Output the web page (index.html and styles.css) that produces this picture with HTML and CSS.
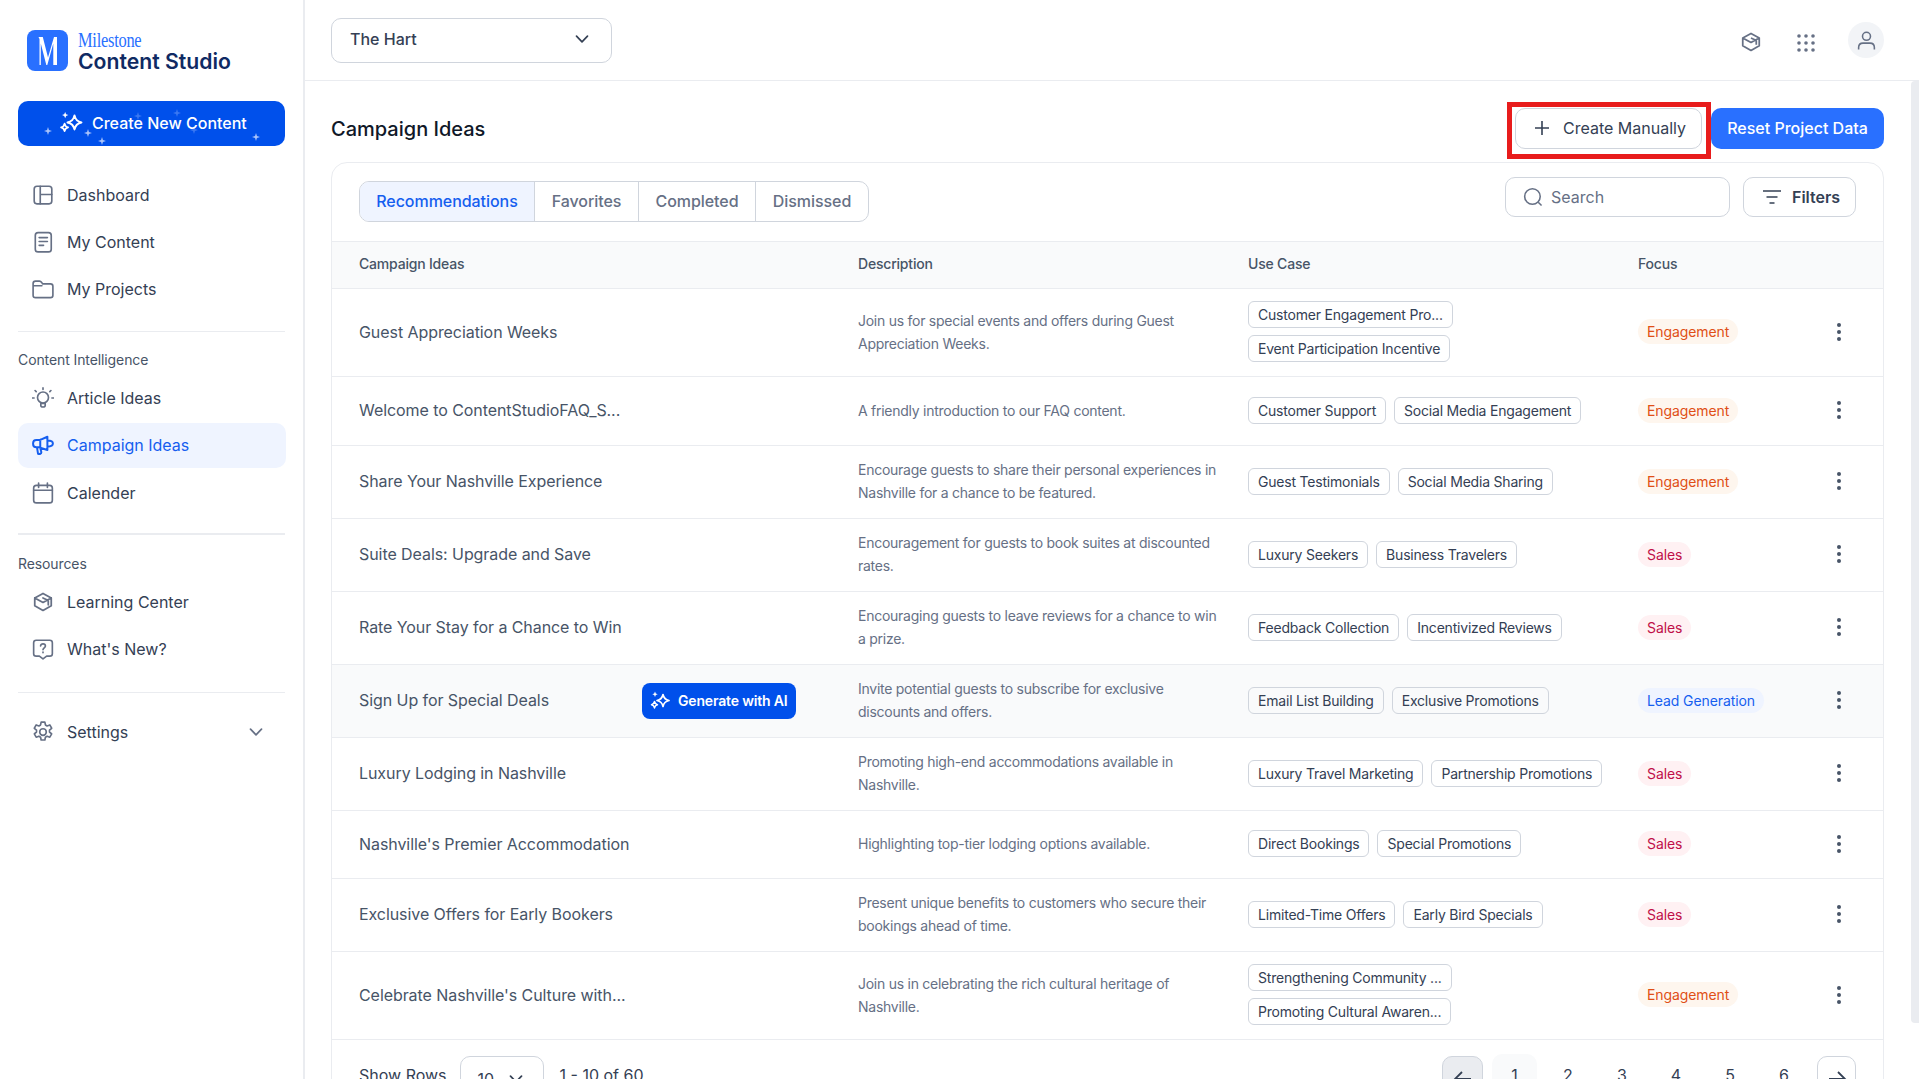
FILE: index.html
```html
<!DOCTYPE html>
<html>
<head>
    <meta charset="utf-8">
    <title>Campaign Ideas</title>
    <link rel="stylesheet" href="styles.css">
</head>
<body>
    <svg class="defs" width="0" height="0">
        <symbol id="sparkle" viewBox="0 0 24 24">
            <path d="M15 5.500c.7 3.600 2.400 5.300 6 6-3.600.7-5.300 2.400-6 6-.7-3.600-2.400-5.300-6-6 3.600-.7 5.300-2.400 6-6z" fill="none" stroke="currentColor" stroke-width="1.700" stroke-linejoin="round"/>
            <path d="M6.500 12.500c.4 2 1.100 2.800 3 3.200-1.900.4-2.600 1.200-3 3.200-.4-2-1.100-2.800-3-3.200 1.900-.4 2.600-1.200 3-3.200z" fill="none" stroke="currentColor" stroke-width="1.500" stroke-linejoin="round"/>
            <path d="M7 2.500l.8 1.900 1.900.8-1.900.8L7 7.900 6.200 6 4.300 5.200l1.900-.8z" fill="currentColor"/>
        </symbol>
        <symbol id="cap" viewBox="0 0 20 20">
            <path d="M10 2.200l7.500 4.100-7.500 4.100-7.500-4.100z M2.500 6.300v7.200l7.500 4.200 7.500-4.200V6.300 M10 6.300l4.800 2.300v4" fill="none" stroke="currentColor" stroke-width="1.600" stroke-linejoin="round"/>
        </symbol>
        <symbol id="chev" viewBox="0 0 16 16">
            <path d="M2.500 5.200L8 10.800l5.500-5.600" fill="none" stroke="currentColor" stroke-width="1.700" stroke-linecap="round" stroke-linejoin="round"/>
        </symbol>
        <symbol id="kebab" viewBox="0 0 6 20">
            <circle cx="3" cy="3" r="2" fill="currentColor"/>
            <circle cx="3" cy="10" r="2" fill="currentColor"/>
            <circle cx="3" cy="17" r="2" fill="currentColor"/>
        </symbol>
    </svg>

    <div class="app">
        <aside class="sidebar">
            <div class="brand">
                <svg class="brand-mark" viewBox="0 0 41 41">
                    <rect width="41" height="41" rx="8" fill="#2970ff"/>
                    <path d="M11.500 7h4.300l5.200 20.500L27 7h3v28h-3.700V13.500L20.300 35h-1L13.800 13.500V35h-1.300V9z" fill="#fff"/>
                </svg>
                <div>
                    <div class="brand-top">Milestone</div>
                    <div class="brand-name">Content Studio</div>
                </div>
            </div>

            <button class="new-btn">
                <i class="star s1"></i><i class="star s2"></i><i class="star s3"></i><i class="star s4"></i>
                <i class="star faint s5"></i><i class="star faint s6"></i><i class="star faint s7"></i>
                <svg class="ic-28"><use href="#sparkle"/></svg>
                <span>Create New Content</span>
            </button>

            <nav class="nav nav-first">
                <a class="nav-item">
                    <svg class="nav-ic" viewBox="0 0 20 20"><rect x="2" y="2" width="16" height="16" rx="2.500"/><path d="M7.500 2v16M7.500 9.500H18"/></svg>
                    Dashboard
                </a>
                <a class="nav-item">
                    <svg class="nav-ic" viewBox="0 0 20 20"><rect x="3" y="1.500" width="14.500" height="17.500" rx="2.500"/><path d="M6.500 6h7.500M6.500 9.500h7.500M6.500 13h4"/></svg>
                    My Content
                </a>
                <a class="nav-item">
                    <svg class="nav-ic" viewBox="0 0 20 20"><path d="M1 5c0-1.300.9-2.200 2.200-2.200h3.600c1 0 1.500.5 2 1.200l.8 1.300h7.200c1.300 0 2.200.9 2.200 2.200v8.200c0 1.300-.9 2.200-2.200 2.200H3.200C1.900 17.900 1 17 1 15.700zM1 7h8"/></svg>
                    My Projects
                </a>
            </nav>

            <div class="rule rule-first"></div>
            <div class="nav-label">Content Intelligence</div>
            <nav class="nav">
                <a class="nav-item">
                    <svg class="nav-ic" viewBox="0 0 20 20"><circle cx="10" cy="9.500" r="5"/><path d="M8 15h4v1.800c0 .8-.9 1.400-2 1.400s-2-.6-2-1.400zM10 .8v1.400M2.800 3.200l1 1M17.200 3.200l-1 1M.5 10h1.400M18.100 10h1.400"/></svg>
                    Article Ideas
                </a>
                <a class="nav-item active">
                    <svg class="nav-ic" viewBox="0 0 20 20"><path d="M14 2.500v12L6 12H4c-1.700 0-3-1.200-3-3V8.500c0-1.800 1.300-3 3-3h3zM7.500 5.200v6.600M14 6c2.500 0 5 .7 5 2.700s-2.500 2.800-5 2.800M4.500 12l1 6c1.500.4 3 0 3-1.500l-1-4"/></svg>
                    Campaign Ideas
                </a>
                <a class="nav-item">
                    <svg class="nav-ic" viewBox="0 0 20 20"><rect x="1.500" y="3" width="17" height="16" rx="2.500"/><path d="M1.500 7.500h17M6 1v4M14 1v4"/></svg>
                    Calender
                </a>
            </nav>

            <div class="rule rule-thick"></div>
            <div class="nav-label">Resources</div>
            <nav class="nav">
                <a class="nav-item">
                    <svg class="nav-ic nav-cap"><use href="#cap"/></svg>
                    Learning Center
                </a>
                <a class="nav-item">
                    <svg class="nav-ic" viewBox="0 0 20 20"><path d="M3.800 2h12.400C17.500 2 18.500 3 18.500 4.300v10c0 1.300-1 2.200-2.300 2.200h-2.900L10 19l-3.300-2.500H3.800c-1.300 0-2.300-.9-2.300-2.200v-10C1.500 3 2.500 2 3.800 2z"/><path d="M7.800 7.200c.2-1.200 1-1.800 2.200-1.800s2.200.8 2.200 1.900c0 1.600-2.200 1.700-2.200 3.300M10 12.700v.6"/></svg>
                    What's New?
                </a>
            </nav>

            <div class="rule rule-last"></div>
            <nav class="nav">
                <a class="nav-item">
                    <svg class="nav-ic" viewBox="0 0 20 20"><circle cx="10" cy="10" r="3"/><path d="M8.300 1h3.400l.5 2.600 1.500.9 2.500-.9 1.700 3-2 1.700v1.700l2 1.700-1.700 3-2.500-.9-1.500.9-.5 2.600H8.300l-.5-2.600-1.500-.9-2.500.9-1.700-3 2-1.700V8.300l-2-1.700 1.700-3 2.500.9 1.500-.9z"/></svg>
                    Settings
                    <svg class="nav-chev"><use href="#chev"/></svg>
                </a>
            </nav>
        </aside>

        <div class="main">
            <header class="topbar">
                <div class="project-select">
                    The Hart
                    <svg class="ic-16"><use href="#chev"/></svg>
                </div>
                <div class="top-icons">
                    <svg class="top-cap"><use href="#cap"/></svg>
                    <svg class="top-grid" viewBox="0 0 18 18">
                        <circle cx="2" cy="2" r="1.800"/><circle cx="9" cy="2" r="1.800"/><circle cx="16" cy="2" r="1.800"/>
                        <circle cx="2" cy="9" r="1.800"/><circle cx="9" cy="9" r="1.800"/><circle cx="16" cy="9" r="1.800"/>
                        <circle cx="2" cy="16" r="1.800"/><circle cx="9" cy="16" r="1.800"/><circle cx="16" cy="16" r="1.800"/>
                    </svg>
                    <div class="avatar">
                        <svg viewBox="0 0 20 20"><circle cx="10" cy="6" r="3.800"/><path d="M2.500 18.500v-1.800c0-2.500 1.700-4.200 4.200-4.200h6.600c2.500 0 4.200 1.700 4.200 4.200v1.800"/></svg>
                    </div>
                </div>
            </header>

            <div class="content">
                <div class="page-head">
                    <h1>Campaign Ideas</h1>
                    <div class="page-actions">
                        <div class="marked">
                            <button class="btn-outline">
                                <svg viewBox="0 0 16 16"><path d="M8 1v14M1 8h14"/></svg>
                                Create Manually
                            </button>
                            <span class="red-box"></span>
                        </div>
                        <button class="btn-primary">Reset Project Data</button>
                    </div>
                </div>

                <section class="card">
                    <div class="toolbar">
                        <div class="tabs">
                            <span class="tab tab-on">Recommendations</span>
                            <span class="tab">Favorites</span>
                            <span class="tab">Completed</span>
                            <span class="tab">Dismissed</span>
                        </div>
                        <div class="tools">
                            <div class="search">
                                <svg viewBox="0 0 18 18"><circle cx="8.500" cy="8.500" r="7"/><path d="M13.700 13.700l3 3"/></svg>
                                Search
                            </div>
                            <button class="filters">
                                <svg viewBox="0 0 20 16"><path d="M1 2h18M4.500 8h11M7.500 14h5"/></svg>
                                Filters
                            </button>
                        </div>
                    </div>

                    <div class="row row-head">
                        <div>Campaign Ideas</div>
                        <div>Description</div>
                        <div>Use Case</div>
                        <div>Focus</div>
                    </div>

                    <div class="row h88">
                        <div class="name">Guest Appreciation Weeks</div>
                        <div class="desc">Join us for special events and offers during Guest Appreciation Weeks.</div>
                        <div class="chips"><span class="chip">Customer Engagement Pro...</span><span class="chip">Event Participation Incentive</span></div>
                        <div><span class="pill pill-eng">Engagement</span></div>
                        <svg class="kebab"><use href="#kebab"/></svg>
                    </div>
                    <div class="row h69">
                        <div class="name">Welcome to ContentStudioFAQ_S...</div>
                        <div class="desc">A friendly introduction to our FAQ content.</div>
                        <div class="chips"><span class="chip">Customer Support</span><span class="chip">Social Media Engagement</span></div>
                        <div><span class="pill pill-eng">Engagement</span></div>
                        <svg class="kebab"><use href="#kebab"/></svg>
                    </div>
                    <div class="row">
                        <div class="name">Share Your Nashville Experience</div>
                        <div class="desc">Encourage guests to share their personal experiences in Nashville for a chance to be featured.</div>
                        <div class="chips"><span class="chip">Guest Testimonials</span><span class="chip">Social Media Sharing</span></div>
                        <div><span class="pill pill-eng">Engagement</span></div>
                        <svg class="kebab"><use href="#kebab"/></svg>
                    </div>
                    <div class="row">
                        <div class="name">Suite Deals: Upgrade and Save</div>
                        <div class="desc">Encouragement for guests to book suites at discounted rates.</div>
                        <div class="chips"><span class="chip">Luxury Seekers</span><span class="chip">Business Travelers</span></div>
                        <div><span class="pill pill-sales">Sales</span></div>
                        <svg class="kebab"><use href="#kebab"/></svg>
                    </div>
                    <div class="row">
                        <div class="name">Rate Your Stay for a Chance to Win</div>
                        <div class="desc">Encouraging guests to leave reviews for a chance to win a prize.</div>
                        <div class="chips"><span class="chip">Feedback Collection</span><span class="chip">Incentivized Reviews</span></div>
                        <div><span class="pill pill-sales">Sales</span></div>
                        <svg class="kebab"><use href="#kebab"/></svg>
                    </div>
                    <div class="row row-hover">
                        <div class="name name-action">
                            Sign Up for Special Deals
                            <button class="gen-btn"><svg class="ic-24"><use href="#sparkle"/></svg>Generate with AI</button>
                        </div>
                        <div class="desc">Invite potential guests to subscribe for exclusive discounts and offers.</div>
                        <div class="chips"><span class="chip">Email List Building</span><span class="chip">Exclusive Promotions</span></div>
                        <div><span class="pill pill-lead">Lead Generation</span></div>
                        <svg class="kebab"><use href="#kebab"/></svg>
                    </div>
                    <div class="row">
                        <div class="name">Luxury Lodging in Nashville</div>
                        <div class="desc">Promoting high-end accommodations available in Nashville.</div>
                        <div class="chips"><span class="chip">Luxury Travel Marketing</span><span class="chip">Partnership Promotions</span></div>
                        <div><span class="pill pill-sales">Sales</span></div>
                        <svg class="kebab"><use href="#kebab"/></svg>
                    </div>
                    <div class="row h68">
                        <div class="name">Nashville's Premier Accommodation</div>
                        <div class="desc">Highlighting top-tier lodging options available.</div>
                        <div class="chips"><span class="chip">Direct Bookings</span><span class="chip">Special Promotions</span></div>
                        <div><span class="pill pill-sales">Sales</span></div>
                        <svg class="kebab"><use href="#kebab"/></svg>
                    </div>
                    <div class="row">
                        <div class="name">Exclusive Offers for Early Bookers</div>
                        <div class="desc">Present unique benefits to customers who secure their bookings ahead of time.</div>
                        <div class="chips"><span class="chip">Limited-Time Offers</span><span class="chip">Early Bird Specials</span></div>
                        <div><span class="pill pill-sales">Sales</span></div>
                        <svg class="kebab"><use href="#kebab"/></svg>
                    </div>
                    <div class="row h88">
                        <div class="name">Celebrate Nashville's Culture with...</div>
                        <div class="desc">Join us in celebrating the rich cultural heritage of Nashville.</div>
                        <div class="chips"><span class="chip">Strengthening Community ...</span><span class="chip">Promoting Cultural Awaren...</span></div>
                        <div><span class="pill pill-eng">Engagement</span></div>
                        <svg class="kebab"><use href="#kebab"/></svg>
                    </div>

                    <div class="pager">
                        <div class="pager-left">
                            Show Rows
                            <div class="rows-select">10 <svg class="ic-16"><use href="#chev"/></svg></div>
                            <span class="range">1 - 10 of 60</span>
                        </div>
                        <div class="pager-right">
                            <span class="arrow arrow-off"><svg viewBox="0 0 20 20"><path d="M18 10H2M9 3l-7 7 7 7"/></svg></span>
                            <span class="page page-on">1</span>
                            <span class="page">2</span>
                            <span class="page">3</span>
                            <span class="page">4</span>
                            <span class="page">5</span>
                            <span class="page">6</span>
                            <span class="arrow arrow-next"><svg viewBox="0 0 20 20"><path d="M2 10h16M11 3l7 7-7 7"/></svg></span>
                        </div>
                    </div>
                </section>
            </div>
            <div class="scrollbar"></div>
        </div>
    </div>
</body>
</html>
```

FILE: styles.css
```css
* {
    box-sizing: border-box;
}
html, body {
    margin: 0;
    height: 100%;
    overflow: hidden;
}
body {
    font-family: Inter, "Noto Sans", sans-serif;
    font-size: 16px;
    color: #344054;
    background: #fff;
}
button {
    font-family: inherit;
    cursor: pointer;
}
.defs {
    position: absolute;
}
.ic-16 { width: 16px; height: 16px; }
.ic-24 { width: 24px; height: 24px; flex-shrink: 0; }
.ic-28 { width: 28px; height: 28px; flex-shrink: 0; }

.app {
    display: flex;
    height: 1079px;
}

/* sidebar */
.sidebar {
    width: 305px;
    flex-shrink: 0;
    padding: 30px 17px 0 18px;
    border-right: 2px solid #eaecf0;
}
.brand {
    display: flex;
    gap: 10px;
    padding-left: 9px;
    height: 41px;
}
.brand-mark {
    width: 41px;
    height: 41px;
}
.brand-top {
    font-family: "Liberation Serif", serif;
    font-size: 20px;
    line-height: 18px;
    letter-spacing: -0.3px;
    color: #2970ff;
    margin-top: 1px;
    transform: scaleX(0.82);
    transform-origin: left center;
}
.brand-name {
    font-size: 21.2px;
    line-height: 25px;
    font-weight: 600;
    color: #0f2a63;
}
.new-btn {
    position: relative;
    width: 267px;
    height: 45px;
    margin-top: 30px;
    display: flex;
    align-items: center;
    justify-content: flex-start;
    gap: 7px;
    padding: 0 0 2px 39px;
    background: #0050eb;
    color: #fff;
    border: none;
    border-radius: 10px;
    font-size: 16px;
    font-weight: 500;
}
.new-btn span {
    position: relative;
}
.star {
    position: absolute;
    width: 8px;
    height: 8px;
    background: #a8c3fa;
    clip-path: polygon(50% 0, 62% 38%, 100% 50%, 62% 62%, 50% 100%, 38% 62%, 0 50%, 38% 38%);
}
.faint { background: #3a78f2; }
.s1 { left: 26px; top: 26px; }
.s2 { left: 66px; top: 28px; }
.s3 { left: 80px; top: 36px; }
.s4 { left: 234px; top: 32px; }
.s5 { left: 116px; top: 11px; }
.s6 { left: 155px; top: 8px; }
.s7 { left: 172px; top: 25px; }

.nav {
    display: flex;
    flex-direction: column;
    gap: 2.500px;
}
.nav-first {
    margin-top: 26px;
    gap: 2px;
}
.nav-item {
    display: flex;
    align-items: center;
    height: 45px;
    padding-left: 14px;
    gap: 13px;
    font-size: 16px;
    color: #344054;
    border-radius: 10px;
}
.nav-item.active {
    background: #eff4ff;
    color: #155eef;
}
.nav-ic {
    width: 22px;
    height: 22px;
    flex-shrink: 0;
    fill: none;
    stroke: #667085;
    stroke-width: 1.500;
    stroke-linecap: round;
    stroke-linejoin: round;
}
.active .nav-ic {
    stroke: #155eef;
    stroke-width: 1.800;
}
.nav-cap {
    color: #667085;
    stroke: none;
}
.nav-chev {
    width: 16px;
    height: 16px;
    margin-left: auto;
    margin-right: 22px;
    color: #667085;
}
.rule {
    height: 1px;
    background: #eaecf0;
    width: 267px;
    margin-top: 18px;
}
.rule-first {
    margin-top: 20px;
}
.rule-thick {
    height: 2px;
    margin-bottom: 19px;
}
.rule-thick + .nav-label {
    margin-top: 0;
}
.rule-last {
    margin-top: 20px;
    margin-bottom: 17px;
}
.nav-label {
    font-size: 14px;
    line-height: 20px;
    letter-spacing: -0.1px;
    color: #475467;
    margin-top: 18px;
    margin-bottom: 5px;
}

/* main column */
.main {
    position: relative;
    flex: 1;
    min-width: 0;
}
.topbar {
    height: 81px;
    padding: 18px 35px 0 26px;
    border-bottom: 1px solid #eaecf0;
    display: flex;
    justify-content: space-between;
    align-items: flex-start;
}
.project-select {
    width: 281px;
    height: 45px;
    display: flex;
    align-items: center;
    justify-content: space-between;
    padding: 0 21px 3px 18px;
    border: 1.500px solid #d0d5dd;
    border-radius: 10px;
    font-weight: 500;
    color: #344054;
}
.top-icons {
    display: flex;
    align-items: center;
    margin-top: 4px;
}
.top-cap {
    width: 22px;
    height: 22px;
    margin-top: 4px;
    margin-right: 35px;
    color: #667085;
}
.top-grid {
    width: 18px;
    height: 18px;
    margin-top: 5px;
    margin-right: 33px;
    fill: #667085;
}
.avatar {
    width: 36px;
    height: 36px;
    border-radius: 50%;
    background: #f2f4f7;
    display: flex;
    align-items: center;
    justify-content: center;
}
.avatar svg {
    width: 21px;
    height: 21px;
    fill: none;
    stroke: #667085;
    stroke-width: 1.500;
}

.content {
    padding: 27px 35px 0 26px;
}
.page-head {
    display: flex;
    justify-content: space-between;
    align-items: flex-start;
    height: 54px;
}
h1 {
    margin: 9px 0 0;
    font-size: 20px;
    line-height: 24px;
    font-weight: 500;
    color: #101828;
}
.page-actions {
    display: flex;
    gap: 9px;
}
.marked {
    position: relative;
}
.btn-outline {
    width: 187px;
    height: 41px;
    display: flex;
    align-items: center;
    padding: 0 0 2px 18px;
    gap: 13px;
    background: #fff;
    border: 1px solid #d0d5dd;
    border-radius: 10px;
    font-size: 16px;
    color: #344054;
}
.btn-outline svg {
    width: 16px;
    height: 16px;
    fill: none;
    stroke: #344054;
    stroke-width: 1.600;
}
.red-box {
    position: absolute;
    left: -8px;
    top: -6px;
    width: 204px;
    height: 57px;
    border: 5px solid #e81c1c;
}
.btn-primary {
    width: 173px;
    height: 41px;
    padding: 0 0 2px;
    background: #2970ff;
    color: #fff;
    border: none;
    border-radius: 10px;
    font-size: 16px;
    font-weight: 500;
}

/* table card */
.card {
    border: 1px solid #eaecf0;
    border-radius: 16px 16px 0 0;
    height: 1000px;
}
.toolbar {
    display: flex;
    justify-content: space-between;
    height: 78px;
    padding: 14px 27px 0 27px;
}
.tabs {
    display: flex;
    height: 41px;
    margin-top: 4px;
    border: 1px solid #d0d5dd;
    border-radius: 10px;
    overflow: hidden;
}
.tab {
    display: flex;
    align-items: center;
    justify-content: center;
    padding-bottom: 1px;
    font-weight: 500;
    letter-spacing: -0.05px;
    color: #667085;
    border-right: 1px solid #d0d5dd;
}
.tab:nth-child(1) { width: 175px; }
.tab:nth-child(2) { width: 104px; }
.tab:nth-child(3) { width: 117px; }
.tab:nth-child(4) { width: 112px; border-right: none; }
.tab-on {
    background: #eff4ff;
    color: #155eef;
}
.tools {
    display: flex;
    gap: 13px;
}
.search {
    width: 225px;
    height: 40px;
    display: flex;
    align-items: center;
    gap: 8px;
    padding: 0 0 1px 17px;
    border: 1px solid #d0d5dd;
    border-radius: 10px;
    color: #667085;
}
.search svg {
    width: 20px;
    height: 20px;
    fill: none;
    stroke: #667085;
    stroke-width: 1.400;
}
.filters {
    width: 113px;
    height: 40px;
    display: flex;
    align-items: center;
    gap: 10px;
    padding: 0 0 1px 18px;
    background: #fff;
    border: 1px solid #d0d5dd;
    border-radius: 10px;
    font-size: 16px;
    font-weight: 600;
    color: #344054;
}
.filters svg {
    width: 20px;
    height: 16px;
    fill: none;
    stroke: #344054;
    stroke-width: 1.600;
}

.row {
    position: relative;
    display: grid;
    grid-template-columns: 499px 390px 390px 1fr;
    align-items: center;
    height: 73px;
    padding-left: 27px;
    padding-bottom: 2px;
    border-bottom: 1px solid #eaecf0;
}
.row-head {
    height: 48px;
    padding-bottom: 3px;
    background: #f9fafb;
    border-top: 1px solid #eaecf0;
    font-size: 14px;
    font-weight: 500;
    letter-spacing: -0.2px;
    color: #475467;
}
.h88 { height: 88px; }
.h69 { height: 69px; }
.h68 { height: 68px; }
.row-hover {
    background: #f9fafb;
}
.name {
    font-size: 16px;
    letter-spacing: -0.07px;
    color: #475467;
}
.name-action {
    display: flex;
    align-items: center;
}
.gen-btn {
    position: absolute;
    left: 310px;
    top: 18px;
    width: 154px;
    height: 36px;
    display: flex;
    align-items: center;
    gap: 6px;
    padding: 0 0 1px 6px;
    background: #0050eb;
    color: #fff;
    border: none;
    border-radius: 8px;
    font-size: 14px;
    font-weight: 600;
    letter-spacing: -0.17px;
}
.desc {
    font-size: 14px;
    line-height: 23px;
    letter-spacing: -0.26px;
    color: #667085;
    padding-right: 25px;
}
.chips {
    display: flex;
    flex-wrap: wrap;
    gap: 7px 8px;
    padding-right: 20px;
}
.chip {
    height: 27px;
    display: flex;
    align-items: center;
    padding: 0 9px;
    border: 1px solid #d0d5dd;
    border-radius: 6px;
    font-size: 14px;
    letter-spacing: -0.2px;
    color: #344054;
    white-space: nowrap;
}
.pill {
    display: inline-flex;
    align-items: center;
    height: 25px;
    padding: 0 9px;
    border-radius: 13px;
    font-size: 14px;
    letter-spacing: -0.1px;
}
.pill-eng { background: #fef6ee; color: #e04f16; }
.pill-sales { background: #fff1f3; color: #c01048; }
.pill-lead { background: #eff4ff; color: #155eef; }
.kebab {
    position: absolute;
    right: 41px;
    top: 50%;
    width: 6px;
    height: 20px;
    margin-top: -11px;
    color: #475467;
}

.pager {
    display: flex;
    justify-content: space-between;
    padding: 16px 27px 0 27px;
    color: #344054;
}
.pager-left {
    display: flex;
    align-items: flex-start;
    line-height: 38px;
}
.rows-select {
    width: 84px;
    height: 45px;
    margin-left: 13px;
    padding-left: 17px;
    display: flex;
    align-items: center;
    gap: 14px;
    border: 1px solid #d0d5dd;
    border-radius: 10px;
}
.range {
    margin-left: 16px;
}
.pager-right {
    display: flex;
    align-items: flex-start;
}
.arrow {
    width: 41px;
    height: 45px;
    display: flex;
    align-items: center;
    justify-content: center;
    border: 1px solid #d0d5dd;
    border-radius: 10px;
}
.arrow svg {
    width: 20px;
    height: 20px;
    fill: none;
    stroke: #344054;
    stroke-width: 1.800;
}
.arrow-off {
    background: #eaecf0;
}
.arrow-next {
    width: 39px;
    margin-left: 6px;
}
.page {
    width: 54px;
    line-height: 38px;
    text-align: center;
}
.page-on {
    width: 45px;
    margin: -2px 4px 0 9px;
    line-height: 42px;
    height: 47px;
    background: #f9fafb;
    border-radius: 10px;
}
.scrollbar {
    position: absolute;
    right: 0;
    top: 81px;
    width: 8px;
    height: 942px;
    background: #eaecf0;
    border-radius: 4px 0 0 4px;
}
```
